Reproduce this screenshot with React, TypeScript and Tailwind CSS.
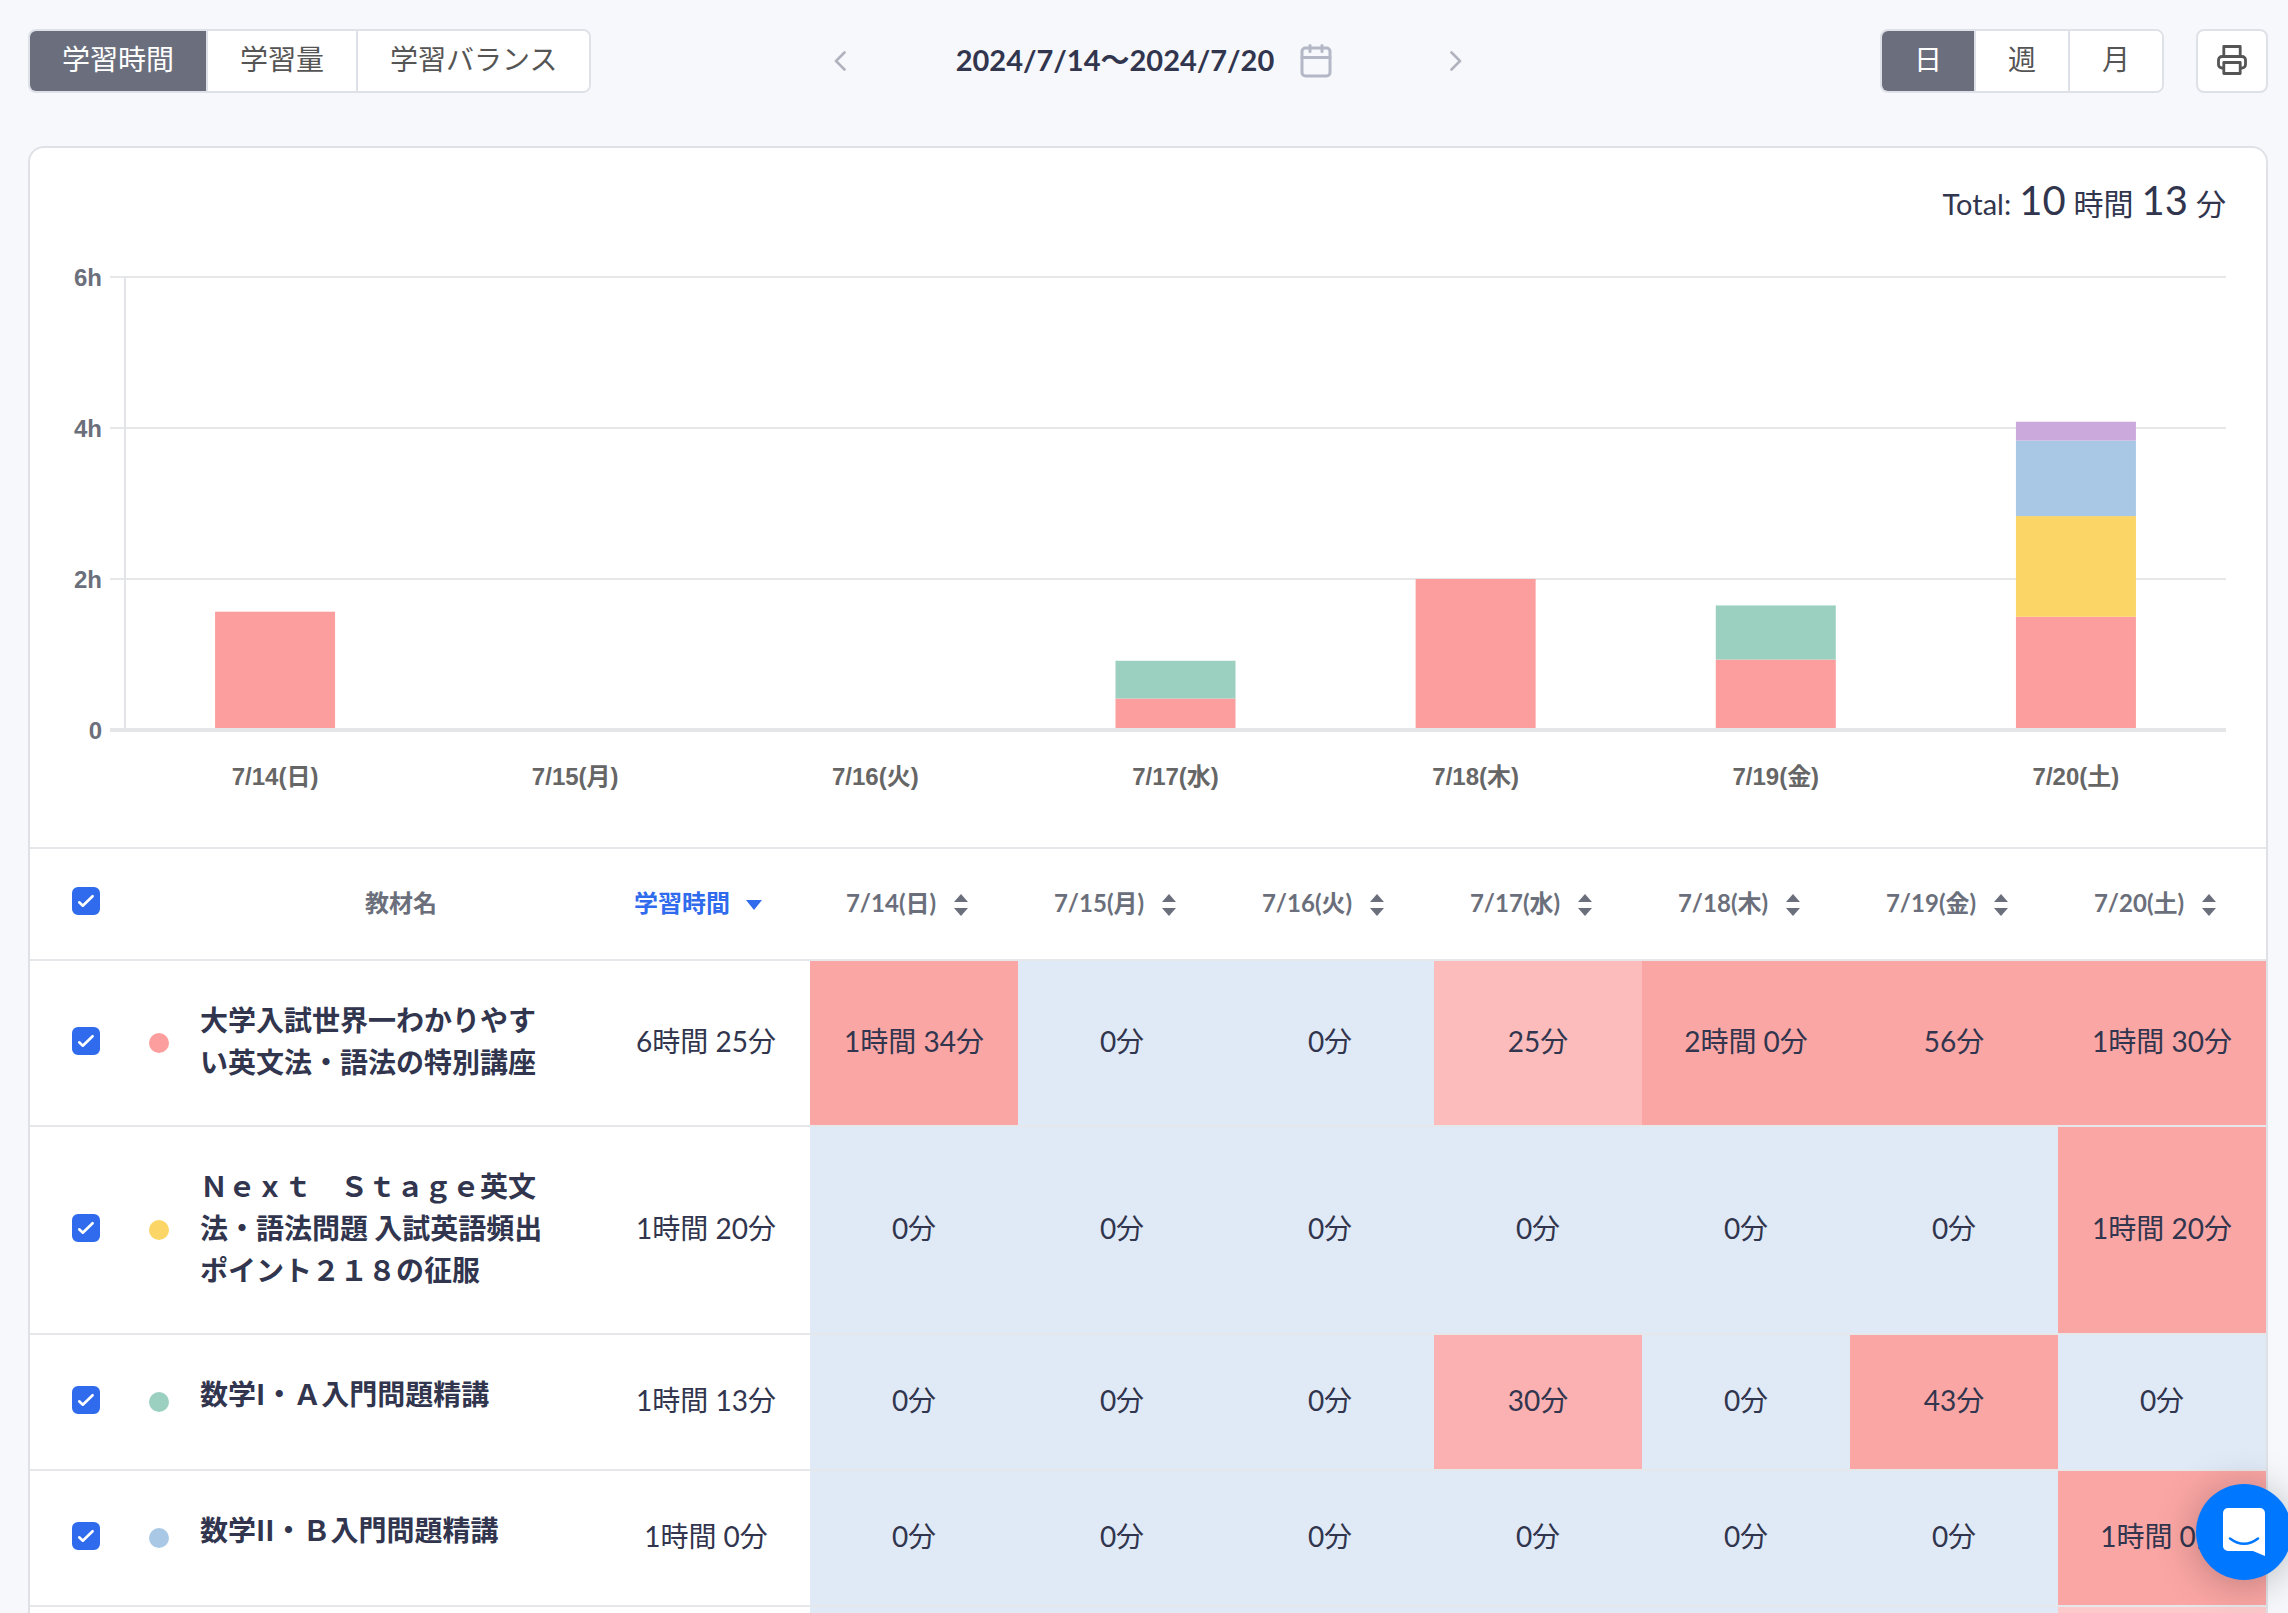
import React, { useState } from "react";

const RED = "#fd9e9e";
const YELLOW = "#fbd566";
const GREEN = "#9bd0c1";
const BLUE = "#a9c8e6";
const PURPLE = "#cba9dc";

const days = ["7/14(日)", "7/15(月)", "7/16(火)", "7/17(水)", "7/18(木)", "7/19(金)", "7/20(土)"];

const bars: { minutes: number; color: string }[][] = [
  [{ minutes: 94, color: RED }],
  [],
  [],
  [{ minutes: 25, color: RED }, { minutes: 30, color: GREEN }],
  [{ minutes: 120, color: RED }],
  [{ minutes: 56, color: RED }, { minutes: 43, color: GREEN }],
  [
    { minutes: 90, color: RED },
    { minutes: 80, color: YELLOW },
    { minutes: 60, color: BLUE },
    { minutes: 15, color: PURPLE },
  ],
];

const rows = [
  {
    name: "大学入試世界一わかりやすい英文法・語法の特別講座",
    dot: "bg-[#fd9e9e]",
    total: "6時間 25分",
    cells: ["1時間 34分", "0分", "0分", "25分", "2時間 0分", "56分", "1時間 30分"],
    heat: [3, 0, 0, 1, 3, 3, 3],
  },
  {
    name: "Ｎｅｘｔ　Ｓｔａｇｅ英文法・語法問題 入試英語頻出ポイント２１８の征服",
    dot: "bg-[#fbd566]",
    total: "1時間 20分",
    cells: ["0分", "0分", "0分", "0分", "0分", "0分", "1時間 20分"],
    heat: [0, 0, 0, 0, 0, 0, 3],
  },
  {
    name: "数学I・Ａ入門問題精講",
    dot: "bg-[#9bd0c1]",
    total: "1時間 13分",
    cells: ["0分", "0分", "0分", "30分", "0分", "43分", "0分"],
    heat: [0, 0, 0, 2, 0, 3, 0],
  },
  {
    name: "数学II・Ｂ入門問題精講",
    dot: "bg-[#a9c8e6]",
    total: "1時間 0分",
    cells: ["0分", "0分", "0分", "0分", "0分", "0分", "1時間 0分"],
    heat: [0, 0, 0, 0, 0, 0, 3],
  },
];

const heatClass = ["bg-[#e0eaf6]", "bg-[#fcbcbc]", "bg-[#fbb1b1]", "bg-[#faa6a4]"];

function Segmented({ label, items }: { label: string; items: string[] }) {
  const [active, setActive] = useState(0);
  return (
    <div role="group" aria-label={label} className="flex h-16 divide-x-2 divide-[#dfe1e8] overflow-hidden rounded-lg border-2 border-[#dfe1e8] bg-white">
      {items.map((item, i) => (
        <button
          key={item}
          type="button"
          aria-pressed={i === active}
          onClick={() => setActive(i)}
          className={
            i === active
              ? "bg-[#6b6f7d] px-8 pb-1 text-[28px] leading-10 whitespace-nowrap text-white"
              : "bg-white px-8 pb-1 text-[28px] leading-10 whitespace-nowrap text-[#555]"
          }
        >
          {item}
        </button>
      ))}
    </div>
  );
}

function Check({ label }: { label: string }) {
  return (
    <span className="relative mx-auto block size-7">
      <input
        type="checkbox"
        defaultChecked
        aria-label={label}
        className="peer block size-7 appearance-none rounded-md border-2 border-[#c5c9d3] bg-white checked:border-[#2f6bec] checked:bg-[#2f6bec]"
      />
      <svg viewBox="0 0 28 28" className="pointer-events-none absolute inset-0 hidden size-7 peer-checked:block" fill="none" stroke="#fff" strokeWidth="2.6" strokeLinecap="round" strokeLinejoin="round">
        <path d="M7.200 15.300l3.600 3.400L20.600 9.200" />
      </svg>
    </span>
  );
}

function Chart() {
  const perMinute = 151 / 120;
  return (
    <div className="pr-10 pl-[95px]">
      <svg className="block h-[456px] w-full overflow-visible" role="img" aria-label="学習時間">
        {["6h", "4h", "2h", "0"].map((t, i) => (
          <g key={t}>
            <text x="-23" y={1 + i * 151} textAnchor="end" dominantBaseline="central" fill="#6b6f7b" className="font-['Liberation_Sans'] text-2xl font-bold">
              {t}
            </text>
            {i < 3 && (
              <>
                <rect x="-15" y={i * 151} width="15" height="2" fill="#e5e7e9" />
                <rect x="0" y={i * 151} width="100%" height="2" fill="#e5e7e9" />
              </>
            )}
          </g>
        ))}
        <rect x="-1" y="0" width="2" height="453" fill="#e2e4e7" />
        {bars.map((stack, i) => {
          let y = 454;
          return (
            <g key={days[i]} transform="translate(-60 0)">
              {stack.map((part) => {
                const h = part.minutes * perMinute;
                y -= h;
                return <rect key={part.color} x={((i + 0.5) * 100) / 7 + "%"} y={y} width="120" height={h} fill={part.color} />;
              })}
            </g>
          );
        })}
        <rect x="-15" y="452" width="15" height="4" fill="#e5e6e8" />
        <rect x="0" y="452" width="100%" height="4" fill="#e5e6e8" />
      </svg>
      <div className="grid grid-cols-7 pt-[29px] pb-[54px] text-center font-['Liberation_Sans','Noto_Sans_CJK_JP',sans-serif] text-2xl font-bold text-[#666]">
        {days.map((d) => (
          <span key={d}>{d}</span>
        ))}
      </div>
    </div>
  );
}

export default function App() {
  return (
    <div lang="ja" className="h-screen overflow-hidden bg-[#f6f8fc] pt-[29px] pr-5 pl-7 font-[Lato,'Noto_Sans_CJK_JP',sans-serif] text-[#31354e]">
      <header className="grid grid-cols-[1fr_auto_1fr] items-center">
        <div className="flex">
          <Segmented label="表示内容" items={["学習時間", "学習量", "学習バランス"]} />
        </div>
        <div className="flex w-[628px] items-center justify-between">
          <button type="button" aria-label="前へ" className="text-[#b0b3bd]">
            <svg viewBox="0 0 12 20" className="h-5 w-3" fill="none" stroke="currentColor" strokeWidth="2.600" strokeLinecap="round" strokeLinejoin="round">
              <path d="M10.500 1.500L2 10l8.500 8.500" />
            </svg>
          </button>
          <button type="button" className="flex items-center gap-[26px] pr-2 text-[29px] leading-10 font-bold whitespace-nowrap">
            <span className="pb-0.5">2024/7/14〜2024/7/20</span>
            <svg viewBox="0 0 32 36" className="h-9 w-8" fill="none" stroke="#b3b7c6" strokeWidth="3" strokeLinecap="round" strokeLinejoin="round">
              <rect x="2" y="5" width="28" height="28" rx="3.500" />
              <path d="M2 14.500h28M10 2.500v6M22 2.500v6" />
            </svg>
          </button>
          <button type="button" aria-label="次へ" className="text-[#b0b3bd]">
            <svg viewBox="0 0 12 20" className="h-5 w-3" fill="none" stroke="currentColor" strokeWidth="2.600" strokeLinecap="round" strokeLinejoin="round">
              <path d="M1.500 1.500L10 10l-8.500 8.500" />
            </svg>
          </button>
        </div>
        <div className="flex justify-end gap-8">
          <Segmented label="期間" items={["日", "週", "月"]} />
          <button type="button" aria-label="印刷" className="flex h-16 w-[72px] items-center justify-center rounded-lg border-2 border-[#dfe1e8] bg-white pb-0.5 text-[#555]">
            <svg viewBox="0 0 30 30" className="size-[30px]" fill="none" stroke="currentColor" strokeWidth="2.800" strokeLinejoin="round">
              <path d="M6.800 11.500V1.500h16.400v10" />
              <path d="M6.800 23H5a3.500 3.500 0 0 1-3.500-3.500V15A3.500 3.500 0 0 1 5 11.500h20a3.500 3.500 0 0 1 3.500 3.500v4.500A3.500 3.500 0 0 1 25 23h-1.800" />
              <path d="M6.800 17.500h16.400v11H6.800z" />
            </svg>
          </button>
        </div>
      </header>

      <main className="mt-[53px] overflow-hidden rounded-2xl border-2 border-[#dfe1e6] bg-white">
        <p className="flex items-baseline justify-end gap-2 pt-7 pr-10 pb-12 text-[30px] leading-[48px]">
          <span className="text-[29px]">Total:</span>
          <span className="text-[40px]">10</span>
          <span>時間</span>
          <span className="text-[40px]">13</span>
          <span>分</span>
        </p>
        <Chart />
        <table className="w-full table-fixed border-collapse text-center">
          <colgroup>
            <col className="w-28" />
            <col className="w-[34px]" />
            <col className="w-[426px]" />
            <col />
            {days.map((d) => (
              <col key={d} />
            ))}
          </colgroup>
          <thead>
            <tr className="h-28 border-y-2 border-[#e5e7ea] text-2xl text-[#6b6f7b]">
              <th className="pb-1.5">
                <Check label="すべて選択" />
              </th>
              <td />
              <th scope="col" className="pb-0.5 pl-6 font-bold">教材名</th>
              <th scope="col" className="pb-0.5">
                <button type="button" className="inline-flex items-center gap-4 pr-4 font-bold whitespace-nowrap text-[#2f6bec]">
                  学習時間
                  <svg viewBox="0 0 16 10" className="mt-1 h-2.5 w-4" fill="currentColor">
                    <path d="M0 0h16L8 10z" />
                  </svg>
                </button>
              </th>
              {days.map((d) => (
                <th key={d} scope="col" className="pb-0.5">
                  <button type="button" className="inline-flex items-center gap-[18px] pr-3.5 font-bold whitespace-nowrap">
                    {d}
                    <svg viewBox="0 0 14 22" className="mt-1 h-[22px] w-3.5" fill="currentColor">
                      <path d="M0 8h14L7 0zM0 14h14l-7 8z" />
                    </svg>
                  </button>
                </th>
              ))}
            </tr>
          </thead>
          <tbody>
            {rows.map((row) => (
              <tr key={row.name} className="h-[136px] border-b-2 border-[#e5e7ea] text-[28px] leading-[42px]">
                <td className="pb-1">
                  <Check label={row.name} />
                </td>
                <td>
                  <span className={"mx-auto block size-5 rounded-full " + row.dot} />
                </td>
                <th scope="row" className="pt-[37px] pr-[52px] pb-[43px] pl-6 text-left align-top font-['Noto_Sans_CJK_JP',sans-serif] font-bold">
                  {row.name}
                </th>
                <td className="pb-1 whitespace-nowrap">{row.total}</td>
                {row.cells.map((c, i) => (
                  <td key={days[i]} className={"pb-1 whitespace-nowrap " + heatClass[row.heat[i]]}>
                    {c}
                  </td>
                ))}
              </tr>
            ))}
            <tr className="h-[136px]">
              <td colSpan={4} />
              <td colSpan={6} className="bg-[#e0eaf6]" />
              <td className="bg-[#fccaca]" />
            </tr>
          </tbody>
        </table>
      </main>

      <button type="button" aria-label="チャットを開く" className="fixed -right-1 bottom-[33px] flex size-24 items-center justify-center rounded-full bg-[#0077ff] shadow-[0_4px_40px_rgba(0,0,0,0.25)]">
        <svg viewBox="0 0 42 48" className="h-12 w-[42px]">
          <path d="M5 0h32a5 5 0 0 1 5 5v43l-12-5H5a5 5 0 0 1-5-5V5a5 5 0 0 1 5-5z" fill="#fff" />
          <path d="M7 30.500q14 10.500 28 0" fill="none" stroke="#0077ff" strokeWidth="2.600" strokeLinecap="round" />
        </svg>
      </button>
    </div>
  );
}
